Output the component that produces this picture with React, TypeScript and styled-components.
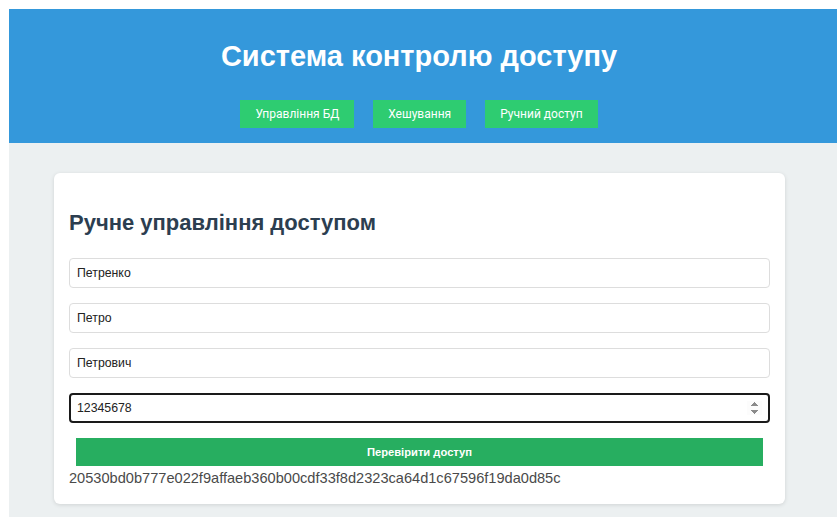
import React, { useState } from 'react';
import styled, { createGlobalStyle } from 'styled-components';

const GlobalStyle = createGlobalStyle`
  * {
    box-sizing: border-box;
  }
  html, body {
    margin: 0;
    padding: 0;
    background: #fff;
  }
  body {
    font-family: "Liberation Sans", Arial, sans-serif;
  }
  input[type=number]::-webkit-inner-spin-button {
    opacity: 1;
  }
`;

const tabs = ['Управління БД', 'Хешування', 'Ручний доступ'];

const App = () => {
  const [lastName, setLastName] = useState('Петренко');
  const [firstName, setFirstName] = useState('Петро');
  const [middleName, setMiddleName] = useState('Петрович');
  const [passport, setPassport] = useState('12345678');

  return (
    <>
      <GlobalStyle />
      <Page>
        <Header>
          <Title>Система контролю доступу</Title>
          <Nav>
            {tabs.map((tab) => (
              <NavButton key={tab}>{tab}</NavButton>
            ))}
          </Nav>
        </Header>
        <Main>
          <Card>
            <Heading>Ручне управління доступом</Heading>
            <Field value={lastName} onChange={(e) => setLastName(e.target.value)} />
            <Field value={firstName} onChange={(e) => setFirstName(e.target.value)} />
            <Field value={middleName} onChange={(e) => setMiddleName(e.target.value)} />
            <Field
              type="number"
              $focused
              value={passport}
              onChange={(e) => setPassport(e.target.value)}
            />
            <CheckButton>Перевірити доступ</CheckButton>
            <HashResult>20530bd0b777e022f9affaeb360b00cdf33f8d2323ca64d1c67596f19da0d85c</HashResult>
          </Card>
        </Main>
      </Page>
    </>
  );
};

export default App;

const Page = styled.div`
  padding: 9px 0 0 9px;
  min-height: 517px;
  display: flex;
  flex-direction: column;
`;

const Header = styled.header`
  background: #3498db;
  padding: 31px 8px 15px 0;
  text-align: center;
`;

const Title = styled.h1`
  margin: 0 0 28px;
  color: #fff;
  font-size: 29px;
  font-weight: 700;
  line-height: 32px;
`;

const Nav = styled.nav`
  display: flex;
  justify-content: center;
  gap: 19px;
`;

const NavButton = styled.button`
  height: 28px;
  padding: 0 15px;
  border: none;
  background: #2ecc71;
  color: #fff;
  font-family: Roboto, "Liberation Sans", sans-serif;
  font-size: 12px;
  cursor: pointer;
`;

const Main = styled.main`
  flex: 1;
  background: #ecf0f1;
  padding: 30px 52px 13px 45px;
`;

const Card = styled.section`
  background: #fff;
  border-radius: 6px;
  box-shadow: 0 1px 4px rgba(0, 0, 0, 0.12);
  padding: 15px 15px 17px;
  display: flex;
  flex-direction: column;
`;

const Heading = styled.h2`
  margin: 22px 0 23px;
  color: #2c3e50;
  font-size: 22px;
  font-weight: 700;
  line-height: 25px;
`;

const Field = styled.input<{ $focused?: boolean }>`
  height: 30px;
  margin-bottom: 15px;
  padding: 0 7px;
  border: 1px solid #ddd;
  border-radius: 4px;
  font-family: "Liberation Sans", Arial, sans-serif;
  font-size: 12.3px;
  color: #222;
  outline: none;

  ${({ $focused }) =>
    $focused &&
    `
    border: 2px solid #1a1a1a;
    padding: 0 6px;
  `}
`;

const CheckButton = styled.button`
  width: 98%;
  height: 28px;
  align-self: center;
  border: none;
  background: #27ae60;
  color: #fff;
  font-family: "Liberation Sans", Arial, sans-serif;
  font-size: 11.2px;
  font-weight: 700;
  cursor: pointer;
`;

const HashResult = styled.div`
  margin-top: 4px;
  color: #4a4a4a;
  font-size: 14.6px;
  line-height: 17px;
`;
